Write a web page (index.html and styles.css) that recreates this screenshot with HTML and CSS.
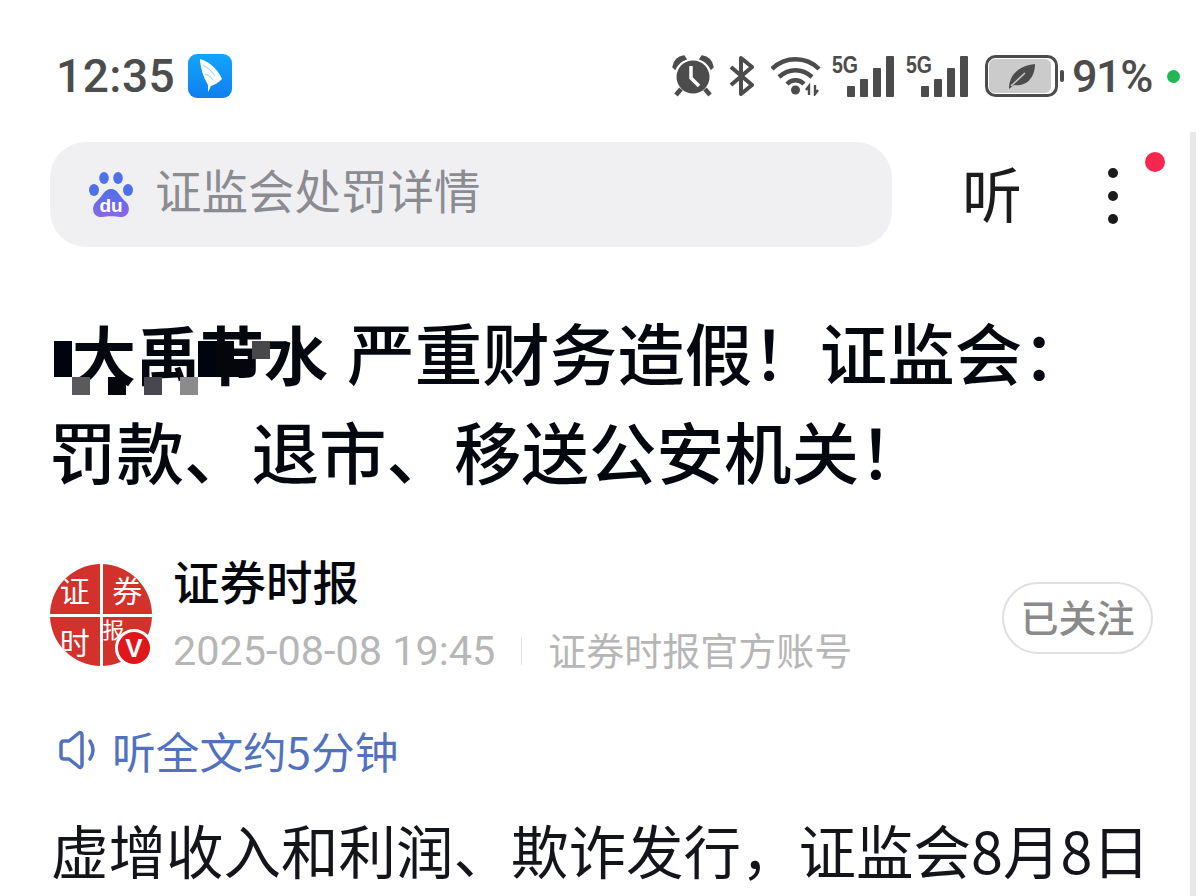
FILE: index.html
```html
<!DOCTYPE html>
<html lang="zh">
<head>
    <meta charset="UTF-8">
    <meta name="viewport" content="width=device-width, initial-scale=1.0">
    <title>证监会处罚详情</title>
    <link rel="stylesheet" href="styles.css">
</head>
<body>
    <div class="scrollbar"></div>

    <!-- Barra de estado -->
    <div class="status-bar">
        <div class="status-left">
            <span class="time">12:35</span>
            <svg class="app-icon" width="44" height="44" viewBox="0 0 44 44">
                <defs>
                    <linearGradient id="appBlue" x1="0" y1="0" x2="0" y2="1">
                        <stop offset="0" stop-color="#12a5fb"/>
                        <stop offset="1" stop-color="#0f80f0"/>
                    </linearGradient>
                </defs>
                <rect width="44" height="44" rx="9" fill="url(#appBlue)"/>
                <path d="M12 5 C20 7 30 15 34 25 C30 29 26 31 23 32 L20 38 L20 31 C18 27 15 22 14 17 C13 13 12 9 12 5Z" fill="#fff"/>
                <path d="M15 11 C20 14 24 17 27 22 M17 20 C20 21 23 23 25 26" stroke="#a9dcfc" stroke-width="1.2" fill="none"/>
            </svg>
        </div>
        <div class="status-right">
            <svg class="alarm" width="42" height="42" viewBox="0 0 42 42">
                <circle cx="21" cy="22" r="16.500" fill="#4c4c4c"/>
                <path d="M19 11 L19 23 L27 31" stroke="#fff" stroke-width="3.500" fill="none"/>
                <path d="M1 12 C2 6 6 2 12 1 L14 4 C8 6 5 10 3 14Z M41 12 C40 6 36 2 30 1 L28 4 C34 6 37 10 39 14Z" fill="#4c4c4c" stroke="#4c4c4c" stroke-width="1.500"/>
                <path d="M9 34 L4 40 M33 34 L38 40" stroke="#4c4c4c" stroke-width="4.500"/>
            </svg>
            <svg class="bt" width="28" height="40" viewBox="0 0 28 40">
                <path d="M3 11 L24 29 L13 38 L13 2 L24 11 L3 29" stroke="#4c4c4c" stroke-width="4" fill="none" stroke-linejoin="round"/>
            </svg>
            <svg class="wifi" width="50" height="40" viewBox="0 0 50 40">
                <path d="M1 13 C14 0 35 0 48 13" stroke="#4c4c4c" stroke-width="4.500" fill="none"/>
                <path d="M8 21 C18 12 31 12 41 21" stroke="#4c4c4c" stroke-width="4.500" fill="none"/>
                <path d="M16 28 C21 23 28 23 33 28" stroke="#4c4c4c" stroke-width="4.500" fill="none"/>
                <circle cx="24.500" cy="34" r="4.500" fill="#4c4c4c"/>
                <path d="M38 39 V30 L35 34 M44 29 V38 L47 34" stroke="#4c4c4c" stroke-width="2.400" fill="none"/>
            </svg>
            <div class="signal">
                <span class="signal-label">5G</span>
                <div class="bars">
                    <i class="bar bar-1"></i><i class="bar bar-2"></i><i class="bar bar-3"></i><i class="bar bar-4"></i>
                </div>
            </div>
            <div class="signal">
                <span class="signal-label">5G</span>
                <div class="bars">
                    <i class="bar bar-1"></i><i class="bar bar-2"></i><i class="bar bar-3"></i><i class="bar bar-4"></i>
                </div>
            </div>
            <svg class="battery" width="80" height="42" viewBox="0 0 80 42">
                <rect x="1.500" y="1.500" width="70" height="39" rx="9" fill="#fff" stroke="#4c4c4c" stroke-width="3"/>
                <rect x="4" y="4" width="62" height="34" rx="6" fill="#cbcbcb"/>
                <path d="M24 32 C25 20 33 11 50 9 C50 22 42 32 29 30 L24 34Z" fill="#4c4c4c"/>
                <path d="M26 31 L40 18" stroke="#cbcbcb" stroke-width="1.500"/>
                <rect x="75" y="15" width="4" height="12" rx="2" fill="#4c4c4c"/>
            </svg>
            <span class="percent">91%</span>
            <span class="green-dot"></span>
        </div>
    </div>

    <!-- Barra de búsqueda -->
    <div class="top-bar">
        <div class="search-box">
            <svg class="baidu" width="46" height="48" viewBox="0 0 46 48">
                <defs>
                    <linearGradient id="duPurple" x1="0" y1="0" x2="0" y2="1">
                        <stop offset="0" stop-color="#4f70e8"/>
                        <stop offset="1" stop-color="#8a66ea"/>
                    </linearGradient>
                </defs>
                <ellipse cx="16" cy="7" rx="4.800" ry="6" fill="#4f70e8"/>
                <ellipse cx="30" cy="7" rx="4.800" ry="6" fill="#4f70e8"/>
                <ellipse cx="6" cy="19" rx="5" ry="6" fill="#4f70e8"/>
                <ellipse cx="40" cy="19" rx="5" ry="6" fill="#4f70e8"/>
                <path d="M23 18 C30 18 31 25 37 30 C44 36 41 47 32 46 C27 45 19 45 14 46 C5 47 2 36 9 30 C15 25 16 18 23 18Z" fill="url(#duPurple)"/>
                <text class="du-text" x="23" y="41" text-anchor="middle">du</text>
            </svg>
            <span class="search-text">证监会处罚详情</span>
        </div>
        <span class="listen-top">听</span>
        <div class="more">
            <i class="more-dot"></i><i class="more-dot"></i><i class="more-dot"></i>
            <span class="red-dot"></span>
        </div>
    </div>

    <!-- Artículo -->
    <h1 class="title">
        <svg class="mosaic" width="240" height="60" viewBox="0 0 240 60">
            <rect x="0" y="0" width="18" height="36" fill="#01040f"/>
            <rect x="18" y="36" width="18" height="18" fill="#5a5a5c"/>
            <rect x="54" y="36" width="18" height="18" fill="#04060c"/>
            <rect x="90" y="36" width="18" height="18" fill="#48464e"/>
            <rect x="126" y="36" width="18" height="18" fill="#8b8b8b"/>
            <rect x="144" y="0" width="18" height="36" fill="#01040f"/>
            <rect x="162" y="0" width="18" height="36" fill="#04060c"/>
            <rect x="180" y="18" width="18" height="18" fill="#04060c"/>
            <rect x="198" y="0" width="18" height="18" fill="#48484a"/>
        </svg>
        <span class="masked">大禹节水</span> 严重财务造假&#xFF01;证监会&#xFF1A;<br>罚款、退市、移送公安机关&#xFF01;
    </h1>

    <div class="author">
        <div class="avatar-wrap">
            <div class="avatar">
                <span class="avatar-cell">证</span>
                <span class="avatar-cell">券</span>
                <span class="avatar-cell">时</span>
                <span class="avatar-cell avatar-cell-last">报</span>
            </div>
            <span class="badge">V</span>
        </div>
        <div class="author-info">
            <div class="author-name">证券时报</div>
            <div class="author-meta">
                <span class="date">2025-08-08 19:45</span>
                <span class="divider"></span>
                <span class="source">证券时报官方账号</span>
            </div>
        </div>
        <button class="follow"><span class="follow-text">已关注</span></button>
    </div>

    <div class="listen-all">
        <svg width="40" height="40" viewBox="0 0 40 40">
            <path d="M3 14 C3 12 4 11 6 11 L11 11 L21 3 C22 2 24 3 24 5 L24 35 C24 37 22 38 21 37 L11 29 L6 29 C4 29 3 28 3 26Z" stroke="#5272c0" stroke-width="3.500" fill="none" stroke-linejoin="round"/>
            <path d="M32 11 C36 17 36 23 32 29" stroke="#5272c0" stroke-width="3.500" fill="none" stroke-linecap="round"/>
        </svg>
        <span>听全文约5分钟</span>
    </div>

    <p class="article-text">虚增收入和利润、欺诈发行&#xFF0C;证监会8月8日</p>
</body>
</html>
```

FILE: styles.css
```css
html, body {
    height: 896px;
    overflow: hidden;
}

body {
    margin: 0;
    padding: 0;
    background-color: #ffffff;
    font-family: "Noto Sans CJK SC", "Noto Sans", sans-serif;
    color: #05070f;
    position: relative;
}

.scrollbar {
    position: absolute;
    right: 4px;
    top: 132px;
    width: 6px;
    height: 764px;
    background-color: #e8e8e8;
}

/* Barra de estado */
.status-bar {
    display: flex;
    align-items: center;
    height: 44px;
    padding: 54px 0 0 56px;
}

.status-left {
    display: flex;
    align-items: center;
    justify-content: space-between;
    width: 176px;
    margin-right: 440px;
}

.time {
    font-family: Roboto, sans-serif;
    font-size: 46px;
    font-weight: 500;
    letter-spacing: 0.5px;
    color: #4c4c4c;
}

.status-right {
    display: flex;
    align-items: center;
    color: #4c4c4c;
}

.alarm { margin-right: 14px; }
.bt { margin-right: 15px; }
.wifi { margin-right: 11px; }
.battery { margin-left: 17px; }

.signal {
    position: relative;
    width: 62px;
    height: 42px;
    margin-right: 12px;
}
.signal + .signal { margin-right: 0; }

.signal-label {
    position: absolute;
    left: 0;
    top: -2px;
    font-family: "Liberation Sans", sans-serif;
    font-size: 23px;
    font-weight: bold;
    line-height: 24px;
    transform: scaleX(0.85);
    transform-origin: left top;
}

.bars {
    position: absolute;
    left: 15px;
    bottom: 0;
    display: flex;
    align-items: flex-end;
    gap: 5px;
}

.bar {
    display: block;
    width: 8px;
    background-color: #4c4c4c;
    border-radius: 1px;
}
.bar-1 { height: 11px; }
.bar-2 { height: 18px; }
.bar-3 { height: 29px; }
.bar-4 { height: 41px; }

.percent {
    font-family: Roboto, sans-serif;
    font-size: 45px;
    font-weight: 500;
    letter-spacing: -1.5px;
    color: #4c4c4c;
    margin-left: 7px;
}

.green-dot {
    width: 13px;
    height: 13px;
    margin-left: 15px;
    border-radius: 50%;
    background-color: #1fb854;
}

/* Barra de búsqueda */
.top-bar {
    display: flex;
    align-items: center;
    margin: 44px 0 0 50px;
    height: 105px;
}

.search-box {
    display: flex;
    align-items: center;
    gap: 21px;
    width: 842px;
    height: 105px;
    padding-left: 38px;
    box-sizing: border-box;
    background-color: #f0f0f3;
    border-radius: 36px;
}

.search-text {
    margin-top: -12px;
    font-size: 46.500px;
    color: #8b8b92;
}

.du-text {
    font-family: "Liberation Sans", sans-serif;
    font-size: 19px;
    font-weight: bold;
    fill: #ffffff;
}

.listen-top {
    margin: -6px 0 0 70px;
    font-size: 60px;
    font-weight: 400;
    color: #1c1c1c;
}

.more {
    position: relative;
    display: flex;
    flex-direction: column;
    gap: 13px;
    margin-left: 86px;
    margin-top: 2px;
}

.more-dot {
    display: block;
    width: 10px;
    height: 10px;
    border-radius: 50%;
    background-color: #1a1a1a;
}

.red-dot {
    position: absolute;
    left: 37px;
    top: -16px;
    width: 20px;
    height: 20px;
    border-radius: 50%;
    background-color: #f5274e;
}

/* Artículo */
.title {
    position: relative;
    margin: 55px 0 0 49px;
    font-size: 67.500px;
    font-weight: 500;
    line-height: 97px;
    white-space: nowrap;
}

.masked {
    margin: 0 4px 0 23px;
    font-size: 64px;
    font-weight: 700;
}

.mosaic {
    position: absolute;
    left: 5px;
    top: 39px;
}

.author {
    display: flex;
    align-items: flex-start;
    margin: 66px 47px 0 50px;
}

.avatar-wrap {
    position: relative;
    width: 102px;
    height: 102px;
    flex-shrink: 0;
}

.avatar {
    display: grid;
    grid-template-columns: 1fr 1fr;
    grid-template-rows: 1fr 1fr;
    gap: 3px;
    width: 102px;
    height: 102px;
    border-radius: 50%;
    overflow: hidden;
}

.avatar-cell {
    display: flex;
    justify-content: center;
    align-items: center;
    background-color: #d2312c;
    color: #ffffff;
    font-size: 30px;
    line-height: 1;
}

.avatar-cell-last {
    justify-content: flex-start;
    align-items: flex-start;
    font-size: 22px;
}

.badge {
    position: absolute;
    right: -1px;
    bottom: -1px;
    width: 38px;
    height: 38px;
    box-sizing: border-box;
    border: 3px solid #ffffff;
    border-radius: 50%;
    background-color: #e0161b;
    color: #ffffff;
    font-family: "Liberation Sans", sans-serif;
    font-size: 26px;
    font-weight: bold;
    line-height: 32px;
    text-align: center;
}

.author-info {
    margin-left: 21px;
    flex: 1;
}

.author-name {
    font-size: 46.500px;
    font-weight: 500;
    line-height: 50px;
    margin-top: -9px;
}

.author-meta {
    display: flex;
    align-items: center;
    margin-top: 23px;
    font-size: 38px;
    line-height: 46px;
    color: #b6b6b6;
}

.date {
    font-family: Roboto, sans-serif;
    font-size: 41.400px;
}

.divider {
    width: 1px;
    height: 28px;
    margin: 0 26px;
    background-color: #e2e2e2;
}

.source {
    margin-top: -4px;
}

.follow {
    width: 151px;
    height: 72px;
    margin-top: 18px;
    padding: 0 0 6px 0;
    background-color: #ffffff;
    border: 2px solid #e0e0e0;
    border-radius: 36px;
    font-family: "Noto Sans CJK SC", sans-serif;
    font-size: 38px;
    font-weight: 500;
    color: #8a8a8a;
}

.listen-all {
    display: flex;
    align-items: center;
    gap: 14px;
    margin: 46px 0 0 58px;
    font-size: 43.700px;
    line-height: 60px;
    color: #5272c0;
}

.article-text {
    margin: 29px 0 0 51px;
    font-size: 57.500px;
    line-height: 80px;
    white-space: nowrap;
    color: #14151a;
}
```
